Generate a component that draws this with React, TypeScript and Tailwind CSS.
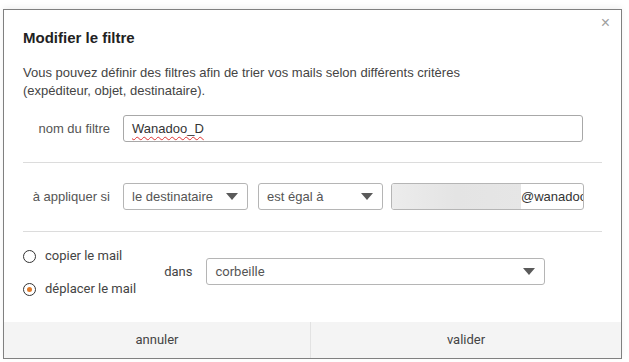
import React from "react";

function Caret() {
  return (
    <svg width="12" height="7" viewBox="0 0 12 7" className="shrink-0">
      <path d="M0 0 L12 0 L6 7 Z" fill="#5a5a5a" />
    </svg>
  );
}

function Select({ label, className }: { label: string; className: string }) {
  return (
    <div
      className={`h-[27px] border border-[#b5b5b5] rounded-[3px] bg-white flex items-center justify-between pl-[8px] pr-[9px] text-[13px] text-[#555] ${className}`}
    >
      <span>{label}</span>
      <Caret />
    </div>
  );
}

export default function App() {
  return (
    <div
      className="w-[629px] h-[362px] bg-white overflow-hidden pt-[9px] pl-[3px]"
      style={{ fontFamily: '"Liberation Sans", Arial, sans-serif' }}
    >
      <div className="relative w-[619px] h-[350px] border border-[#808080] bg-white flex flex-col shadow-[0_-2px_6px_rgba(0,0,0,0.06)]">
        <div className="absolute right-[11px] top-[5px] text-[#a0a0a0] text-[16px] leading-none">
          ×
        </div>
        <div className="pl-[19px] pr-[19px] pt-[19px] flex-1 flex flex-col">
          <div className="text-[15px] font-bold text-[#222] leading-[18px]">Modifier le filtre</div>
          <div className="mt-[17px] text-[13px] text-[#444] leading-[18px]">
            Vous pouvez définir des filtres afin de trier vos mails selon différents critères
            <br />
            (expéditeur, objet, destinataire).
          </div>
          <div className="mt-[15px] flex items-center">
            <div className="w-[87px] text-right text-[13px] text-[#555]">nom du filtre</div>
            <div className="ml-[13px] w-[460px] h-[27px] border border-[#a8a8a8] rounded-[3px] flex items-center pl-[8px] text-[13px] text-[#333]">
              <span className="underline decoration-wavy decoration-[#d33] underline-offset-[3px] decoration-1">
                Wanadoo_D
              </span>
            </div>
          </div>
          <div className="mt-[20px] w-[579px] h-px bg-[#dcdcdc]" />
          <div className="mt-[20px] flex items-center">
            <div className="w-[87px] text-right text-[13px] text-[#555]">à appliquer si</div>
            <Select label="le destinataire" className="ml-[13px] w-[125px]" />
            <Select label="est égal à" className="ml-[10px] w-[125px]" />
            <div className="ml-[8px] w-[193px] h-[27px] border border-[#b5b5b5] rounded-[3px] flex items-center overflow-hidden text-[13px] text-[#333]">
              <div className="w-[129px] shrink-0 h-full bg-gradient-to-r from-[#ececec] via-[#e4e4e4] to-[#e6e6e6]" />
              <span className="whitespace-nowrap">@wanadoo.fr</span>
            </div>
          </div>
          <div className="mt-[21px] w-[579px] h-px bg-[#dcdcdc]" />
          <div
            className="flex items-start mt-[15px]"
            style={{ fontFamily: 'Roboto, "Liberation Sans", Arial, sans-serif' }}
          >
            <div className="flex flex-col text-[13px] text-[#444]">
              <div className="flex items-center h-[18px]">
                <span className="w-[13px] h-[13px] rounded-full border-[1.5px] border-[#333] box-border" />
                <span className="ml-[9px]">copier le mail</span>
              </div>
              <div className="flex items-center h-[18px] mt-[15px]">
                <span className="w-[13px] h-[13px] rounded-full border-[1.5px] border-[#333] box-border flex items-center justify-center">
                  <span className="w-[5px] h-[5px] rounded-full bg-[#e07b2a]" />
                </span>
                <span className="ml-[9px]">déplacer le mail</span>
              </div>
            </div>
            <div className="flex items-center mt-[11px]">
              <div className="ml-[28px] text-[13px] text-[#444]">dans</div>
              <Select label="corbeille" className="ml-[14px] w-[339px] h-[27px]" />
            </div>
          </div>
        </div>
        <div
          className="h-[36px] bg-[#f4f4f4] flex text-[13px] text-[#444]"
          style={{ fontFamily: 'Roboto, "Liberation Sans", Arial, sans-serif' }}
        >
          <div className="w-[307px] flex items-center justify-center border-r border-[#e2e2e2]">annuler</div>
          <div className="flex-1 flex items-center justify-center">valider</div>
        </div>
      </div>
    </div>
  );
}
